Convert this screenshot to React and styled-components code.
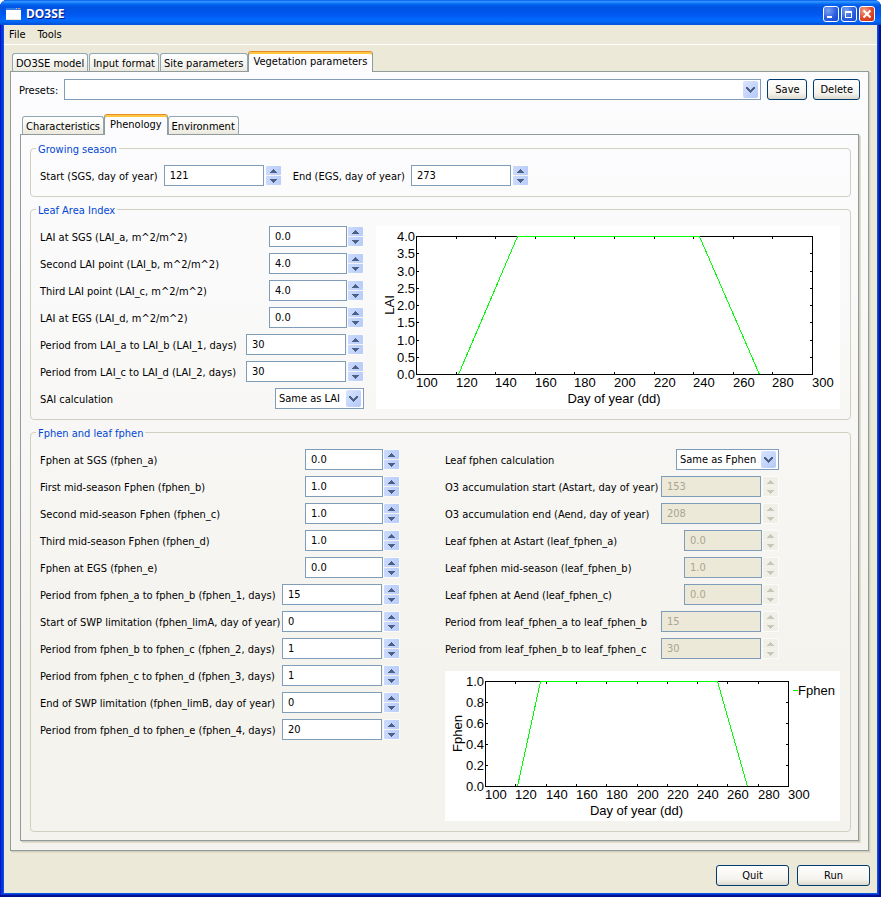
import React, { useState } from "react";
import styled, { createGlobalStyle, css } from "styled-components";

const uiFont = `"DejaVu Sans Condensed", "DejaVu Sans", sans-serif`;

const GlobalStyle = createGlobalStyle`
  *, *::before, *::after { box-sizing: border-box; }
  body {
    margin: 0;
    background: #fff;
    color: #000;
    font: 11px/13px ${uiFont};
  }
  button, input, select { font: inherit; color: inherit; margin: 0; }
`;

/* ---------- Window frame ---------- */

const Window = styled.div`
  display: flex;
  flex-direction: column;
  min-height: 100vh;
  border-radius: 7px 7px 0 0;
  overflow: hidden;
  background: #0831d9;
  box-shadow: inset -2px -2px 0 #00138c, inset 1px 0 0 #0019cf;
`;

const TitleBar = styled.header`
  display: flex;
  align-items: center;
  gap: 5px;
  height: 25px;
  padding: 2px 6px 0;
  background: linear-gradient(
    #0058ee 0%, #3593ff 6%, #288eff 9%, #127dff 12%, #0464ee 18%, #0054e3 28%,
    #0055eb 50%, #005bf5 64%, #026afe 80%, #0062ef 90%, #0046c4 100%
  );
`;

const Title = styled.h1`
  flex: 1;
  margin: 0;
  font: bold 12px/16px "Noto Sans", ${uiFont};
  color: #fff;
  text-shadow: 1px 1px 0 #0a1883;
`;

const CaptionButtons = styled.div`
  display: flex;
  gap: 2px;
`;

const CaptionButton = styled.button`
  display: grid;
  place-items: center;
  width: 16px;
  height: 16px;
  padding: 0;
  border: 1px solid #fff;
  border-radius: 3px;
  background: ${(p) =>
    p.$close
      ? "radial-gradient(circle at 30% 25%, #f0a088, #e0482a 55%, #c23010)"
      : "radial-gradient(circle at 30% 25%, #7ba2f0, #2b5fe0 55%, #1b45c4)"};
`;

const Body = styled.div`
  display: flex;
  flex-direction: column;
  flex: 1;
  margin: 0 4px 4px;
  background: #ece9d8;
  box-shadow: 0 0 0 1px #0855dd;
`;

const MenuBar = styled.nav`
  display: flex;
  height: 20px;
  padding: 0 1px;
  border-bottom: 1px solid #fff;
`;

const MenuButton = styled.button`
  padding: 0 6px 1px 4px;
  margin-right: 2px;
  border: 0;
  background: none;
`;

/* ---------- Tabs ---------- */

const TabArea = styled.div`
  display: flex;
  flex-direction: column;
  flex: 1;
  min-width: 0;
`;

const OuterTabArea = styled(TabArea)`
  padding: 6px 8px 0 6px;
`;

const InnerTabArea = styled(TabArea)`
  padding: 14px 9px 9px;
`;

const TabList = styled.div`
  display: flex;
  align-items: flex-end;
  height: 20px;
  padding-left: 2px;
`;

const Tab = styled.button`
  flex: none;
  height: 18px;
  padding: 1px 3px 0;
  margin-right: 1px;
  border: 1px solid #91a7b4;
  border-bottom: 0;
  border-radius: 3px 3px 0 0;
  background: linear-gradient(#fff, #f5f4ee 60%, #ebe9dd);
  white-space: nowrap;

  ${(p) =>
    p.$active &&
    css`
      position: relative;
      z-index: 1;
      height: 21px;
      padding: 0 5px 2px;
      margin: 0 0 -1px -1px;
      border-color: #e68b2c #919b9c transparent;
      background: #fcfcfe;
      box-shadow: inset 0 2px 0 #ffc73c;
    `}
`;

const TabPanel = styled.section`
  display: flex;
  flex-direction: column;
  flex: 1;
  min-width: 0;
  border: 1px solid #919b9c;
  background: linear-gradient(#fcfcfe, #f4f3ee 520px);
  box-shadow: 1px 1px 0 #d0cebf, 2px 2px 0 #e0ddcb;
`;

const FormPanel = styled(TabPanel)`
  gap: 6px;
  padding: 7px 7px 8px 9px;
`;

/* ---------- Controls ---------- */

const PushButton = styled.button`
  height: 21px;
  padding: 0 6px;
  min-width: ${(p) => (p.$wide ? "73px" : "40px")};
  border: 1px solid #003c74;
  border-radius: 3px;
  background: linear-gradient(#fff, #f4f3ee 70%, #dcd8cc);
`;

const SelectBox = styled.span`
  display: inline-grid;
  grid-template-columns: minmax(0, 1fr) 17px;
  align-items: center;
  flex: ${(p) => (p.$fill ? "1" : "none")};
  width: ${(p) => p.$width || "auto"};
  margin-right: ${(p) => (p.$fill ? "0" : "-1px")};
  height: 21px;
  border: 1px solid #7f9db9;
  background: #fff;
`;

const NativeSelect = styled.select`
  grid-area: 1 / 1 / 2 / 3;
  width: 100%;
  height: 19px;
  padding: 0 18px 0 3px;
  border: 0;
  background: transparent;
  appearance: none;
`;

const DropArrow = styled.svg`
  grid-area: 1 / 2;
  width: 15px;
  height: 17px;
  border-radius: 2px;
  background: linear-gradient(135deg, #d8e4ff, #b4c8f8);
  pointer-events: none;
`;

const SpinField = styled.span`
  display: flex;
  align-items: center;
  gap: ${(p) => (p.$short ? "1px" : "2px")};
`;

const NumberInput = styled.input`
  width: ${(p) => (p.$short ? "78px" : "100px")};
  height: 21px;
  padding: 0 4px 1px 5px;
  border: 1px solid #7f9db9;
  border-radius: 0;
  background: #fff;

  &:disabled {
    background: #ece9d8;
    color: #a9a693;
  }
`;

const SpinButtons = styled.span`
  display: grid;
  grid-template-rows: 9px 9px;
  gap: 1px;
  width: 15px;
  outline: 1px solid #fbfbf8;
  background: #f4f3ee;
`;

const SpinButton = styled.button`
  display: grid;
  place-items: center;
  padding: 0;
  border: 0;
  border-radius: 1px;
  background: linear-gradient(90deg, #cbdafd, #b9cdfb);
  color: #4d6185;

  &:disabled {
    background: #f0efe8;
    color: #c9c7ba;
  }
`;

const ArrowGlyph = styled.svg`
  display: block;
  width: 7px;
  height: 4px;
`;

/* ---------- Form layout ---------- */

const FieldLabel = styled.label`
  padding-top: 2px;
  white-space: nowrap;
`;

const PresetRow = styled.div`
  display: flex;
  align-items: center;
  gap: 6px;
  padding: 7px 8px 0;
`;

const Group = styled.fieldset`
  min-width: 0;
  margin: 0;
  padding: 10px 10px 10px 9px;
  border: 1px solid #d0d0bf;
  border-radius: 4px;
  flex: ${(p) => (p.$fill ? "1" : "none")};
`;

const GroupTitle = styled.legend`
  height: 13px;
  line-height: 15px;
  margin-left: -4px;
  padding: 0 2px;
  color: #0046d5;
`;

const InlineFields = styled.div`
  display: flex;
  flex-wrap: wrap;
  gap: 12px;
`;

const InlineField = styled.div`
  display: flex;
  align-items: center;
  gap: 6px;
`;

const Split = styled.div`
  display: grid;
  grid-template-columns: ${(p) => p.$formWidth} minmax(0, 1fr);
  gap: ${(p) => p.$gap};
`;

const FieldList = styled.div`
  display: flex;
  flex-direction: column;
  gap: 6px;
  width: ${(p) => p.$width || "auto"};
`;

const FieldRow = styled.div`
  display: flex;
  align-items: center;
  justify-content: space-between;
  height: 21px;
`;

const Stack = styled.div`
  display: flex;
  flex-direction: column;
  gap: 12px;
  min-width: 0;
`;

const ChartSvg = styled.svg`
  display: block;
  width: 100%;
  height: auto;
  background: #fff;
  font: 13px "Liberation Sans", Arial, sans-serif;
`;

const Footer = styled.footer`
  display: flex;
  justify-content: flex-end;
  gap: 8px;
  padding: 14px 7px 7px;
`;

/* ---------- Components ---------- */

function Spinner({ id, value, step = 1, digits = 0, disabled }) {
  const [text, setText] = useState(value);
  const nudge = (sign) =>
    setText((Number(text) + sign * step).toFixed(digits));
  const short = digits > 0;
  return (
    <SpinField $short={short}>
      <NumberInput
        id={id}
        type="text"
        inputMode="decimal"
        $short={short}
        value={text}
        disabled={disabled}
        onChange={(e) => setText(e.target.value)}
      />
      <SpinButtons>
        <SpinButton type="button" aria-label="Increase" disabled={disabled} onClick={() => nudge(1)}>
          <ArrowGlyph viewBox="0 0 7 4" shapeRendering="crispEdges">
            <path d="M3 0h1v1h1v1h1v1h1v1H0V3h1V2h1V1h1z" fill="currentColor" />
          </ArrowGlyph>
        </SpinButton>
        <SpinButton type="button" aria-label="Decrease" disabled={disabled} onClick={() => nudge(-1)}>
          <ArrowGlyph viewBox="0 0 7 4" shapeRendering="crispEdges">
            <path d="M0 0h7v1H6v1H5v1H4v1H3V3H2V2H1V1H0z" fill="currentColor" />
          </ArrowGlyph>
        </SpinButton>
      </SpinButtons>
    </SpinField>
  );
}

function Select({ id, options, width, fill }) {
  return (
    <SelectBox $width={width} $fill={fill}>
      <NativeSelect id={id} defaultValue={options[0]}>
        {options.map((o) => (
          <option key={o}>{o}</option>
        ))}
      </NativeSelect>
      <DropArrow viewBox="0 0 15 17" shapeRendering="crispEdges">
        <path
          d="M3 6h2v1h1v1h1v1h1v-1h1v-1h1v-1h2v2h-1v1h-1v1h-1v1h-1v1h-1v-1h-1v-1h-1v-1h-1v-1h-1z"
          fill="#4d6185"
        />
      </DropArrow>
    </SelectBox>
  );
}

function Fields({ items, width }) {
  return (
    <FieldList $width={width}>
      {items.map((f) => (
        <FieldRow key={f.id}>
          <FieldLabel htmlFor={f.id}>{f.label}</FieldLabel>
          {f.options ? (
            <Select id={f.id} options={f.options} width={f.width} />
          ) : (
            <Spinner
              id={f.id}
              value={f.value}
              disabled={f.disabled}
              digits={f.value.includes(".") ? 1 : 0}
              step={f.value.includes(".") ? 0.1 : 1}
            />
          )}
        </FieldRow>
      ))}
    </FieldList>
  );
}

function Chart({ width, height, box, yMax, yStep, yLabelX, title, points, legend }) {
  const { left, top, right, bottom } = box;
  const px = (v) => Math.round(left + ((v - 100) / 200) * (right - left));
  const py = (v) => Math.round(bottom - (v / yMax) * (bottom - top));
  const xTicks = Array.from({ length: 11 }, (_, i) => 100 + i * 20);
  const yTicks = Array.from({ length: Math.round(yMax / yStep) + 1 }, (_, i) => i * yStep);
  const midX = (left + right) / 2;
  const midY = (top + bottom) / 2;
  return (
    <ChartSvg viewBox={`0 0 ${width} ${height}`} role="img" aria-label={`${title} by day of year`}>
      <g stroke="#000" fill="none" shapeRendering="crispEdges">
        <rect x={left + 0.5} y={top + 0.5} width={right - left} height={bottom - top} />
        {xTicks.map((v) => (
          <path key={v} d={`M${px(v) + 0.5} ${top}v3M${px(v) + 0.5} ${bottom}v-2`} />
        ))}
        {yTicks.map((v) => (
          <path key={v} d={`M${left} ${py(v) + 0.5}h3M${right} ${py(v) + 0.5}h-2`} />
        ))}
      </g>
      <polyline
        points={points.map(([x, y]) => `${px(x) + 0.5},${py(y) + 0.5}`).join(" ")}
        fill="none"
        stroke="#0f0"
        shapeRendering="crispEdges"
      />
      {xTicks.map((v) => (
        <text key={v} x={px(v)} y={bottom + 13}>{v}</text>
      ))}
      {yTicks.map((v) => (
        <text key={v} x={left - 1} y={py(v) + 5} textAnchor="end">{v.toFixed(1)}</text>
      ))}
      <text x={midX} y={bottom + 29} textAnchor="middle">Day of year (dd)</text>
      <text transform={`translate(${yLabelX} ${midY}) rotate(-90)`} textAnchor="middle">{title}</text>
      {legend && (
        <>
          <path d={`M${right + 5} ${top + 9.5}h5`} stroke="#0f0" shapeRendering="crispEdges" />
          <text x={right + 10} y={top + 14}>{legend}</text>
        </>
      )}
    </ChartSvg>
  );
}

/* ---------- Data ---------- */

const laiFields = [
  { id: "lai_a", label: "LAI at SGS (LAI_a, m^2/m^2)", value: "0.0" },
  { id: "lai_b", label: "Second LAI point (LAI_b, m^2/m^2)", value: "4.0" },
  { id: "lai_c", label: "Third LAI point (LAI_c, m^2/m^2)", value: "4.0" },
  { id: "lai_d", label: "LAI at EGS (LAI_d, m^2/m^2)", value: "0.0" },
  { id: "lai_1", label: "Period from LAI_a to LAI_b (LAI_1, days)", value: "30" },
  { id: "lai_2", label: "Period from LAI_c to LAI_d (LAI_2, days)", value: "30" },
  { id: "sai", label: "SAI calculation", options: ["Same as LAI"], width: "89px" },
];

const fphenFields = [
  { id: "fphen_a", label: "Fphen at SGS (fphen_a)", value: "0.0" },
  { id: "fphen_b", label: "First mid-season Fphen (fphen_b)", value: "1.0" },
  { id: "fphen_c", label: "Second mid-season Fphen (fphen_c)", value: "1.0" },
  { id: "fphen_d", label: "Third mid-season Fphen (fphen_d)", value: "1.0" },
  { id: "fphen_e", label: "Fphen at EGS (fphen_e)", value: "0.0" },
  { id: "fphen_1", label: "Period from fphen_a to fphen_b (fphen_1, days)", value: "15" },
  { id: "fphen_limA", label: "Start of SWP limitation (fphen_limA, day of year)", value: "0" },
  { id: "fphen_2", label: "Period from fphen_b to fphen_c (fphen_2, days)", value: "1" },
  { id: "fphen_3", label: "Period from fphen_c to fphen_d (fphen_3, days)", value: "1" },
  { id: "fphen_limB", label: "End of SWP limitation (fphen_limB, day of year)", value: "0" },
  { id: "fphen_4", label: "Period from fphen_d to fphen_e (fphen_4, days)", value: "20" },
];

const leafFields = [
  { id: "leaf_calc", label: "Leaf fphen calculation", options: ["Same as Fphen"], width: "103px" },
  { id: "astart", label: "O3 accumulation start (Astart, day of year)", value: "153", disabled: true },
  { id: "aend", label: "O3 accumulation end (Aend, day of year)", value: "208", disabled: true },
  { id: "leaf_a", label: "Leaf fphen at Astart (leaf_fphen_a)", value: "0.0", disabled: true },
  { id: "leaf_b", label: "Leaf fphen mid-season (leaf_fphen_b)", value: "1.0", disabled: true },
  { id: "leaf_c", label: "Leaf fphen at Aend (leaf_fphen_c)", value: "0.0", disabled: true },
  { id: "leaf_1", label: "Period from leaf_fphen_a to leaf_fphen_b", value: "15", disabled: true },
  { id: "leaf_2", label: "Period from leaf_fphen_b to leaf_fphen_c", value: "30", disabled: true },
];

function Tabs({ names, active }) {
  return (
    <TabList role="tablist">
      {names.map((n) => (
        <Tab key={n} type="button" role="tab" aria-selected={n === active} $active={n === active}>
          {n}
        </Tab>
      ))}
    </TabList>
  );
}

export default function App() {
  return (
    <>
      <GlobalStyle />
      <Window>
        <TitleBar>
          <svg width="15" height="12" viewBox="0 0 15 12" shapeRendering="crispEdges" aria-hidden="true">
            <rect width="15" height="12" fill="#fff" />
            <rect width="15" height="2" fill="#2f7be6" />
            <rect x="10" width="1" height="1" fill="#9cc4ff" />
            <rect x="12" width="2" height="1" fill="#f08a5a" />
            <rect y="11" width="15" height="1" fill="#e6e2cc" />
          </svg>
          <Title>DO3SE</Title>
          <CaptionButtons>
            <CaptionButton type="button" aria-label="Minimize">
              <svg width="14" height="14" viewBox="0 0 14 14" shapeRendering="crispEdges">
                <rect x="3" y="9" width="5" height="2" fill="#fff" />
              </svg>
            </CaptionButton>
            <CaptionButton type="button" aria-label="Maximize">
              <svg width="14" height="14" viewBox="0 0 14 14" shapeRendering="crispEdges">
                <path d="M3 4h7v7H3zM4 6v4h5V6z" fill="#fff" fillRule="evenodd" />
              </svg>
            </CaptionButton>
            <CaptionButton type="button" aria-label="Close" $close>
              <svg width="14" height="14" viewBox="0 0 14 14">
                <path d="M3.5 3.5l7 7M10.5 3.5l-7 7" stroke="#fff" strokeWidth="2" />
              </svg>
            </CaptionButton>
          </CaptionButtons>
        </TitleBar>
        <Body>
          <MenuBar>
            <MenuButton type="button">File</MenuButton>
            <MenuButton type="button">Tools</MenuButton>
          </MenuBar>
          <OuterTabArea>
            <Tabs
              names={["DO3SE model", "Input format", "Site parameters", "Vegetation parameters"]}
              active="Vegetation parameters"
            />
            <TabPanel role="tabpanel">
              <PresetRow>
                <FieldLabel htmlFor="presets">Presets:</FieldLabel>
                <Select id="presets" options={[""]} fill />
                <PushButton type="button">Save</PushButton>
                <PushButton type="button">Delete</PushButton>
              </PresetRow>
              <InnerTabArea>
                <Tabs names={["Characteristics", "Phenology", "Environment"]} active="Phenology" />
                <FormPanel role="tabpanel">
                  <Group>
                    <GroupTitle>Growing season</GroupTitle>
                    <InlineFields>
                      <InlineField>
                        <FieldLabel htmlFor="sgs">Start (SGS, day of year)</FieldLabel>
                        <Spinner id="sgs" value="121" />
                      </InlineField>
                      <InlineField>
                        <FieldLabel htmlFor="egs">End (EGS, day of year)</FieldLabel>
                        <Spinner id="egs" value="273" />
                      </InlineField>
                    </InlineFields>
                  </Group>
                  <Group>
                    <GroupTitle>Leaf Area Index</GroupTitle>
                    <Split $formWidth="323px" $gap="13px">
                      <Fields items={laiFields} />
                      <Chart
                        width={464}
                        height={183}
                        box={{ left: 40, top: 10, right: 436, bottom: 148 }}
                        yMax={4}
                        yStep={0.5}
                        yLabelX={18}
                        title="LAI"
                        points={[[121, 0], [151, 4], [243, 4], [273, 0]]}
                      />
                    </Split>
                  </Group>
                  <Group $fill>
                    <GroupTitle>Fphen and leaf fphen</GroupTitle>
                    <Split $formWidth="359px" $gap="46px">
                      <Fields items={fphenFields} />
                      <Stack>
                        <Fields items={leafFields} width="333px" />
                        <Chart
                          width={395}
                          height={150}
                          box={{ left: 40, top: 10, right: 343, bottom: 115 }}
                          yMax={1}
                          yStep={0.2}
                          yLabelX={17}
                          title="Fphen"
                          points={[[121, 0], [136, 1], [253, 1], [273, 0]]}
                          legend="Fphen"
                        />
                      </Stack>
                    </Split>
                  </Group>
                </FormPanel>
              </InnerTabArea>
            </TabPanel>
          </OuterTabArea>
          <Footer>
            <PushButton type="button" $wide>Quit</PushButton>
            <PushButton type="button" $wide>Run</PushButton>
          </Footer>
        </Body>
      </Window>
    </>
  );
}
